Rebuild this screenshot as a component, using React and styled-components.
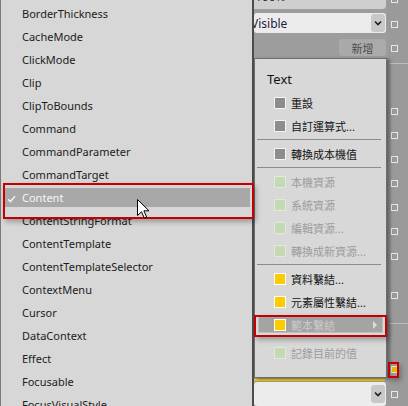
import React from 'react';
import styled, { createGlobalStyle } from 'styled-components';

const GlobalStyle = createGlobalStyle`
  html, body {
    margin: 0;
    padding: 0;
    background: #9c9c9c;
    overflow: hidden;
  }
  body {
    font-family: "Noto Sans", "Noto Sans CJK TC", sans-serif;
  }
  * {
    box-sizing: border-box;
  }
`;

const properties = [
  'BorderThickness', 'CacheMode', 'ClickMode', 'Clip', 'ClipToBounds', 'Command',
  'CommandParameter', 'CommandTarget', 'Content', 'ContentStringFormat', 'ContentTemplate',
  'ContentTemplateSelector', 'ContextMenu', 'Cursor', 'DataContext', 'Effect', 'Focusable',
  'FocusVisualStyle',
];

const menuItems = [
  { label: '重設', icon: 'gray' },
  { label: '自訂運算式...', icon: 'gray' },
  { sep: true },
  { label: '轉換成本機值', icon: 'gray' },
  { sep: true },
  { label: '本機資源', icon: 'green', disabled: true },
  { label: '系統資源', icon: 'green', disabled: true },
  { label: '編輯資源...', icon: 'green', disabled: true },
  { label: '轉換成新資源...', icon: 'green', disabled: true },
  { sep: true },
  { label: '資料繫結...', icon: 'yellow' },
  { label: '元素屬性繫結...', icon: 'yellow' },
  { label: '範本繫結', icon: 'yellow', active: true, submenu: true },
  { spacer: true },
  { label: '記錄目前的值', icon: 'green', disabled: true },
];

// markers in the right-hand strip, by their top edge
const sideMarks = [
  { kind: 'sq', top: -4 }, { kind: 'sq', top: 21 }, { kind: 'sq', top: 45 },
  { kind: 'rule', top: 63 }, { kind: 'sq', top: 108 }, { kind: 'sq', top: 132 },
  { kind: 'sq', top: 156 }, { kind: 'sq', top: 180 }, { kind: 'sq', top: 204 },
  { kind: 'sq', top: 228 }, { kind: 'sq', top: 253 }, { kind: 'sq', top: 292 },
  { kind: 'rule', top: 323 }, { kind: 'yellow', top: 366 }, { kind: 'sq', top: 391 },
];

const iconColors = {
  gray: { fill: '#8c8c8c', edge: '#f4f4f4' },
  green: { fill: '#c5d9b4', edge: '#dfeadb' },
  yellow: { fill: '#fccb00', edge: '#ffffff' },
};

const Screen = styled.div`
  position: relative;
  width: 408px;
  height: 406px;
  overflow: hidden;
  display: grid;
  grid-template-columns: 252px 1fr;
`;

const ListPanel = styled.div`
  height: 406px;
  overflow: hidden;
  background: #d7d7d7;
  border-left: 1px solid #7a7a7a;
  padding-top: 2px;
`;

const ListItem = styled.div`
  display: flex;
  align-items: center;
  height: 23px;
  padding-left: 21px;
  font-size: 11px;
  color: #1c1c1c;
  white-space: nowrap;
`;

const SelectedItem = styled.div`
  display: flex;
  align-items: center;
  height: 19px;
  margin: 2px 2px 2px 2px;
  padding-left: 4px;
  background: #a8a8a8;
  font-size: 11px;
  color: #f6f6f6;
  white-space: nowrap;
`;

const Check = styled.svg`
  width: 9px;
  height: 8px;
  margin-right: 6px;
  margin-top: 2px;
`;

const PropertyPanel = styled.div`
  height: 406px;
  display: grid;
  grid-template-columns: 1fr 21px;
  border-left: 2px solid #4c4c4c;
  background: #9d9d9d;
  overflow: hidden;
`;

const MainColumn = styled.div`
  display: flex;
  flex-direction: column;
  height: 406px;
  overflow: hidden;
`;

const TopField = styled.div`
  height: 9px;
  margin-right: 1px;
  background: #cfcfcf;
  border-radius: 0 0 4px 0;
  overflow: hidden;
  font-size: 12px;
  line-height: 12px;
  color: #333;
`;

const TopValue = styled.span`
  display: block;
  margin-top: -9px;
  padding-left: 1px;
`;

const Combo = styled.div`
  display: flex;
  align-items: center;
  height: ${({ $h }) => $h}px;
  margin-top: ${({ $mt }) => $mt}px;
  margin-right: 1px;
  background: #ececec;
  border-radius: 3px;
  overflow: hidden;
  font-size: 12px;
  color: #1d1d3a;
`;

const ComboText = styled.span`
  flex: 1;
  margin-left: -3px;
  white-space: nowrap;
`;

const DropButton = styled.div`
  display: flex;
  align-items: center;
  justify-content: center;
  align-self: ${({ $top }) => ($top ? 'flex-start' : 'center')};
  margin-top: ${({ $top }) => ($top ? '3px' : '0')};
  width: 14px;
  height: 18px;
  margin-right: 1px;
  flex-shrink: 0;
  background: #c8c8c8;
  border-radius: 3px;
`;

const ButtonRow = styled.div`
  display: flex;
  justify-content: flex-end;
  margin-top: 6px;
  padding-right: 1px;
`;

const AddButton = styled.div`
  display: flex;
  align-items: center;
  justify-content: center;
  width: 47px;
  height: 17px;
  background: #aaaaaa;
  border-radius: 3px;
  font-size: 11px;
  color: #4e4e4e;
`;

const Filler = styled.div`
  flex: 1;
`;

const YellowLine = styled.div`
  height: 2px;
  margin-right: 2px;
  background: #f0c000;
  border-radius: 0 0 2px 0;
`;

const SideColumn = styled.div`
  display: flex;
  flex-direction: column;
  align-items: flex-start;
  height: 406px;
  padding-left: 4px;
  background: #9a9a9a;
  overflow: hidden;
`;

const SideSquare = styled.div`
  flex-shrink: 0;
  width: 7px;
  height: 7px;
  margin-top: ${({ $mt }) => $mt}px;
  border: 1px solid ${({ $yellow }) => ($yellow ? '#dedede' : '#e8e8e8')};
  background: ${({ $yellow }) => ($yellow ? '#e8b600' : 'transparent')};
`;

const SideRule = styled.div`
  flex-shrink: 0;
  align-self: stretch;
  height: 1px;
  margin-top: ${({ $mt }) => $mt}px;
  margin-left: -2px;
  background: #bdbdbd;
`;

const Menu = styled.div`
  position: absolute;
  left: 254px;
  top: 58px;
  width: 133px;
  padding-bottom: 13px;
  background: #d8d8d8;
  border: 1px solid #6e6e6e;
  box-shadow: 3px 1px 3px rgba(0, 0, 0, 0.35);
  z-index: 2;
`;

const MenuHeader = styled.div`
  height: 32px;
  padding: 10px 0 2px 12px;
  font-size: 13px;
  line-height: 20px;
  color: #111;
`;

const MenuItem = styled.div`
  display: flex;
  align-items: center;
  gap: 5px;
  height: 23px;
  padding-left: 19px;
  font-size: 11px;
  color: ${({ $disabled }) => ($disabled ? '#9c9c9c' : '#141414')};
  white-space: nowrap;
`;

const ActiveItem = styled.div`
  display: flex;
  align-items: center;
  gap: 5px;
  height: 17px;
  margin: 3px;
  padding-left: 15px;
  background: #a4a4a4;
  border: 1px solid #bfbfbf;
  font-size: 11px;
  color: #cbcbcb;
  white-space: nowrap;
`;

const ItemIcon = styled.span`
  width: 12px;
  height: 12px;
  flex-shrink: 0;
  background: ${({ $kind }) => iconColors[$kind].fill};
  border: 1px solid ${({ $kind }) => iconColors[$kind].edge};
`;

const SubArrow = styled.span`
  margin-left: auto;
  margin-right: 5px;
  border-left: 4px solid #dcdcdc;
  border-top: 4px solid transparent;
  border-bottom: 4px solid transparent;
`;

const Separator = styled.div`
  height: 5px;
  padding: 2px 5px 0 2px;

  &::after {
    content: '';
    display: block;
    height: 1px;
    background: #8a8a8a;
  }
`;

const Spacer = styled.div`
  height: 5px;
`;

const RedFrame = styled.div`
  position: absolute;
  left: ${({ $x }) => $x}px;
  top: ${({ $y }) => $y}px;
  width: ${({ $w }) => $w}px;
  height: ${({ $h }) => $h}px;
  border: 2px solid #c40000;
  box-shadow: 2px 3px 5px rgba(0, 0, 0, 0.28);
  pointer-events: none;
  z-index: 3;
`;

const Pointer = styled.svg`
  position: absolute;
  left: 137px;
  top: 199px;
  width: 13px;
  height: 20px;
  z-index: 4;
`;

const Chevron = () => (
  <svg width="8" height="6" viewBox="0 0 8 6">
    <path d="M1 1.5 L4 4.5 L7 1.5" fill="none" stroke="#1e1e1e" strokeWidth="1.6" />
  </svg>
);

const SideStrip = () => {
  let bottom = 0;
  return (
    <SideColumn>
      {sideMarks.map((m, i) => {
        const mt = m.top - bottom;
        if (m.kind === 'rule') {
          bottom = m.top + 1;
          return <SideRule key={i} $mt={mt} />;
        }
        bottom = m.top + 7;
        return <SideSquare key={i} $mt={mt} $yellow={m.kind === 'yellow'} />;
      })}
    </SideColumn>
  );
};

const ContextMenu = () => (
  <Menu>
    <MenuHeader>Text</MenuHeader>
    {menuItems.map((item, i) => {
      if (item.sep) return <Separator key={i} />;
      if (item.spacer) return <Spacer key={i} />;
      if (item.active) {
        return (
          <ActiveItem key={i}>
            <ItemIcon $kind={item.icon} />
            {item.label}
            {item.submenu && <SubArrow />}
          </ActiveItem>
        );
      }
      return (
        <MenuItem key={i} $disabled={item.disabled}>
          <ItemIcon $kind={item.icon} />
          {item.label}
        </MenuItem>
      );
    })}
  </Menu>
);

const App = () => {
  return (
    <>
      <GlobalStyle />
      <Screen>
        <ListPanel>
          {properties.map((name) =>
            name === 'Content' ? (
              <SelectedItem key={name}>
                <Check viewBox="0 0 9 8">
                  <path d="M1 4.2 L3.4 6.6 L8 1.2" fill="none" stroke="#f2f2f2" strokeWidth="1.5" />
                </Check>
                {name}
              </SelectedItem>
            ) : (
              <ListItem key={name}>{name}</ListItem>
            )
          )}
        </ListPanel>

        <PropertyPanel>
          <MainColumn>
            <TopField>
              <TopValue>100%</TopValue>
            </TopField>
            <Combo $h={20} $mt={4}>
              <ComboText>Visible</ComboText>
              <DropButton>
                <Chevron />
              </DropButton>
            </Combo>
            <ButtonRow>
              <AddButton>新增</AddButton>
            </ButtonRow>
            <Filler />
            <YellowLine />
            <Combo $h={24} $mt={1}>
              <ComboText />
              <DropButton $top>
                <Chevron />
              </DropButton>
            </Combo>
          </MainColumn>
          <SideStrip />
        </PropertyPanel>

        <ContextMenu />

        <RedFrame $x={3} $y={183} $w={251} $h={36} />
        <RedFrame $x={254} $y={315} $w={133} $h={22} />
        <RedFrame $x={388} $y={362} $w={11} $h={16} />

        <Pointer viewBox="0 0 13 20">
          <path
            d="M0.5 0.5 V16.5 L4.5 12.8 L7.3 19 L9.6 18 L6.9 11.8 H12 Z"
            fill="#ffffff"
            stroke="#000000"
            strokeWidth="1"
            strokeLinejoin="round"
          />
        </Pointer>
      </Screen>
    </>
  );
};

export default App;
